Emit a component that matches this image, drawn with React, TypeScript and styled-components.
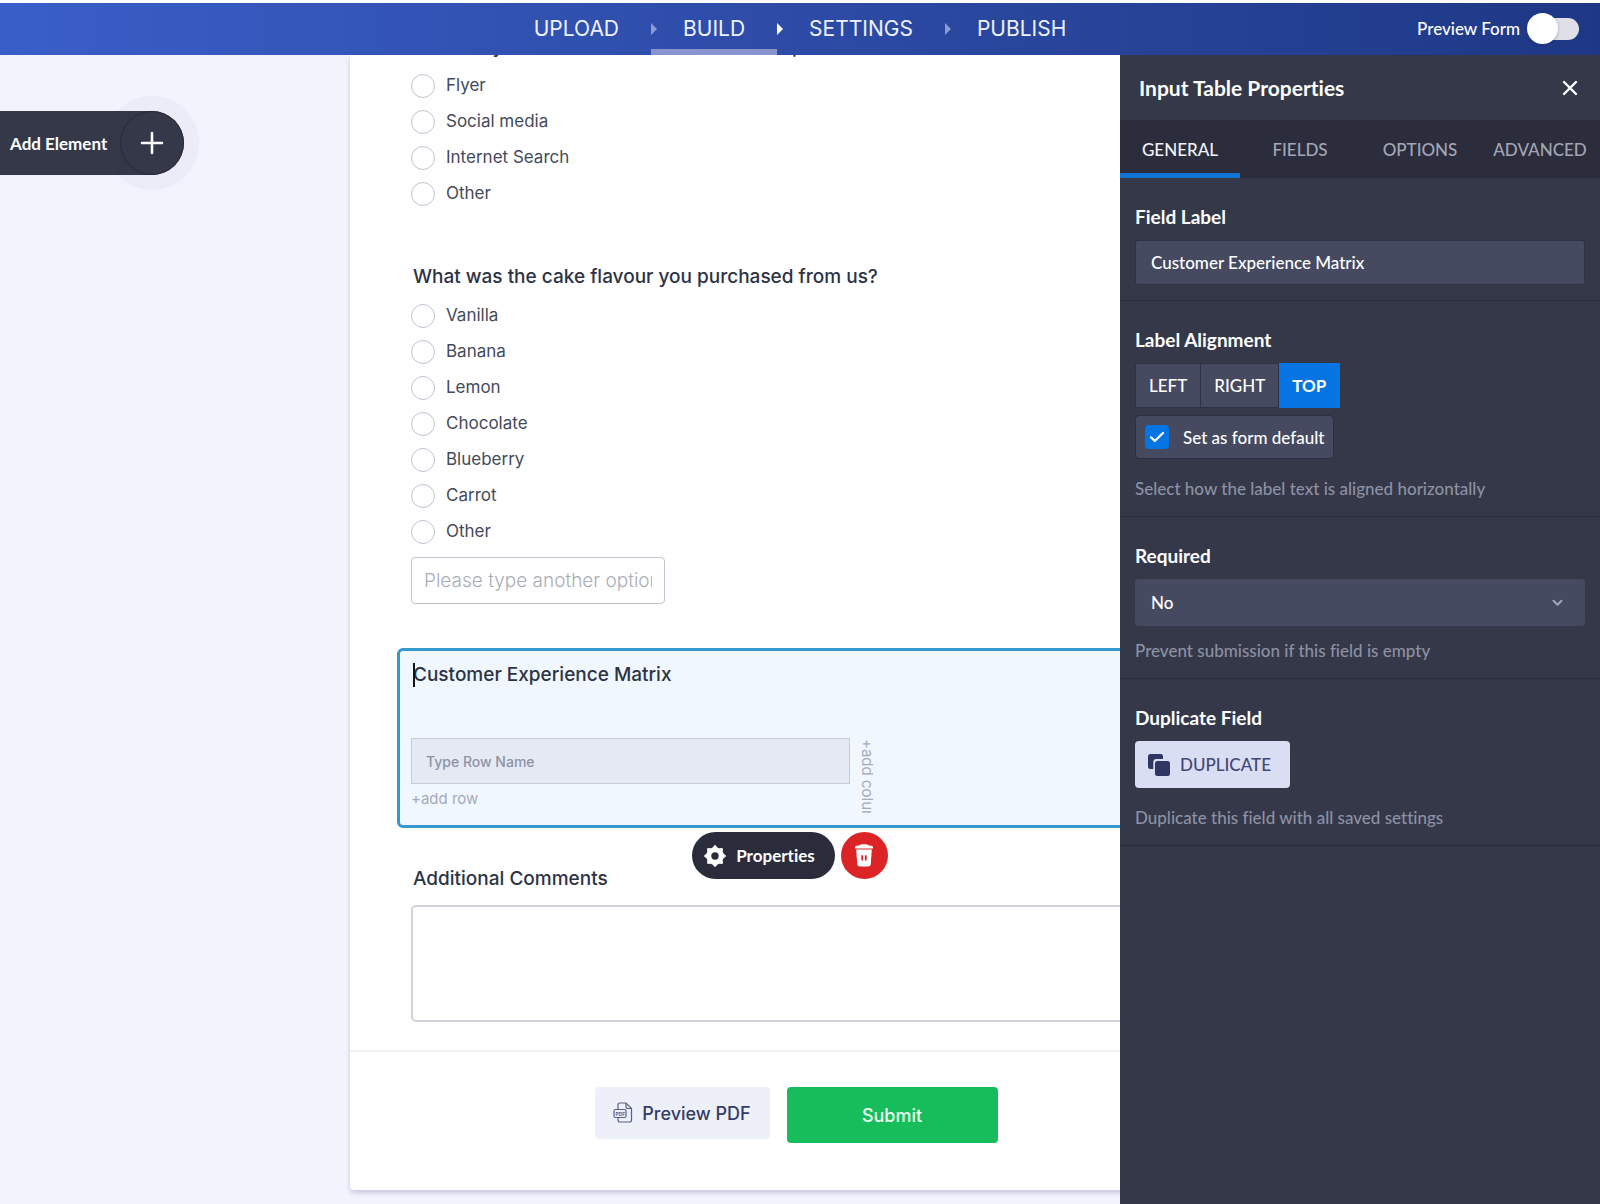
import React, { useState } from "react";
import styled, { createGlobalStyle, css } from "styled-components";

const formFont = `Inter, "Noto Sans", sans-serif`;
const panelFont = `Lato, "Open Sans", sans-serif`;

const GlobalStyle = createGlobalStyle`
  *, *::before, *::after { box-sizing: border-box; }
  body { margin: 0; background: #f3f3fe; font-family: ${formFont}; font-variant-ligatures: no-common-ligatures; }
  button, input, select, textarea { font: inherit; color: inherit; margin: 0; font-variant-ligatures: inherit; }
  button { cursor: pointer; }
`;

const Page = styled.div`
  display: flex;
  flex-direction: column;
  min-height: 100vh;
  border-top: 3px solid #fff;
`;

/* ---------- header ---------- */

const Header = styled.header`
  display: grid;
  grid-template-columns: 1fr auto 1fr;
  align-items: center;
  height: 52px;
  color: #fff;
  background: linear-gradient(90deg, #3a5ec8 0%, #2d4ba6 50%, #1e3885 100%);
`;

const Steps = styled.nav`
  grid-column: 2;
  display: flex;
  height: 100%;
`;

const Step = styled.a<{ $current?: boolean; $lit?: boolean; $first?: boolean }>`
  position: relative;
  display: flex;
  align-items: center;
  padding: 0 32px;
  font-size: 21px;
  line-height: 24px;
  color: #eef1ff;
  text-decoration: none;
  box-shadow: ${(p) => (p.$current ? "inset 0 -6px 0 #8794cd" : "none")};

  &::before {
    content: "";
    display: ${(p) => (p.$first ? "none" : "block")};
    position: absolute;
    left: 0;
    border-style: solid;
    border-width: 6px 0 6px 6px;
    border-color: transparent transparent transparent ${(p) => (p.$lit ? "#fff" : "#8c9ad6")};
  }
`;

const PreviewToggle = styled.label`
  justify-self: end;
  display: flex;
  align-items: center;
  gap: 10px;
  padding-right: 21px;
  font-family: ${panelFont};
  font-size: 17px;
  font-weight: 500;
  line-height: 24px;
`;

const Switch = styled.input`
  appearance: none;
  position: relative;
  width: 49px;
  height: 22px;
  border-radius: 11px;
  background: #dfdfe8;

  &::before {
    content: "";
    position: absolute;
    top: -5px;
    left: -3px;
    width: 31px;
    height: 31px;
    border-radius: 50%;
    background: #fff;
    box-shadow: 0 1px 3px rgba(20, 30, 80, 0.3);
  }
  &:checked::before { left: 21px; }
`;

/* ---------- workspace ---------- */

const Workspace = styled.div`
  display: flex;
  flex: 1;
`;

const Builder = styled.main`
  display: flex;
  align-items: flex-start;
  flex: 1;
  min-width: 0;
  overflow: hidden;
`;

const Rail = styled.div`
  flex: 0 0 350px;
  padding-top: 56px;
`;

const AddElement = styled.button`
  display: flex;
  align-items: center;
  justify-content: space-between;
  width: 184px;
  height: 64px;
  padding: 0 0 0 10px;
  border: 0;
  border-radius: 0 32px 32px 0;
  background: #343849;
  color: #fff;
  font-family: ${panelFont};
  font-size: 17px;
  font-weight: 700;
`;

const PlusDisc = styled.span`
  display: grid;
  place-items: center;
  width: 64px;
  height: 64px;
  border-radius: 50%;
  border: 1px solid #282b3a;
  background: #343849;
  box-shadow: 0 0 0 15px rgba(40, 40, 70, 0.03);
`;

const FormCard = styled.form`
  flex: 1 0 880px;
  background: #fff;
  border-radius: 0 0 4px 4px;
  box-shadow: 0 3px 5px rgba(90, 95, 150, 0.28);
`;

const FormBody = styled.div`
  padding: 0 61px 28px;
  color: #2c3345;
`;

const Question = styled.fieldset<{ $scrolled?: boolean }>`
  border: 0;
  padding: 0;
  margin: ${(p) => (p.$scrolled ? "-20px 0 53px" : "0 0 44px")};
  min-width: 0;
`;

const questionText = css`
  display: block;
  padding: 0 0 0 2px;
  font-size: 19px;
  font-weight: 450;
  line-height: 24px;
`;

const Legend = styled.legend`
  ${questionText}
  margin-bottom: 9px;
`;

const Option = styled.label`
  display: flex;
  align-items: center;
  gap: 11px;
  height: 36px;
  font-size: 17px;
  line-height: 24px;
  color: #434a5c;
`;

const OptionText = styled.span`
  padding-bottom: 3px;
`;

const Radio = styled.input`
  appearance: none;
  width: 24px;
  height: 24px;
  border: 1px solid #bfc3cf;
  border-radius: 50%;
  background: #fff;
  &:checked { border: 7px solid #0075e3; }
`;

const OtherInput = styled.input`
  display: block;
  width: 254px;
  height: 47px;
  margin-top: 7px;
  padding: 0 12px;
  border: 1px solid #c0c4ce;
  border-radius: 4px;
  font-size: 19px;
  font-weight: 300;
  &::placeholder { color: #a9adb8; opacity: 1; }
`;

const SelectedField = styled.section`
  position: relative;
  height: 180px;
  margin: 0 -14px 39px;
  padding: 12px 12px 0 11px;
  border: 3px solid #3398cd;
  border-radius: 6px;
  background: #f0f7ff;
`;

const FieldTitle = styled.h2`
  ${questionText}
  margin: 0 0 51px;
`;

const Caret = styled.span`
  position: absolute;
  width: 2px;
  height: 24px;
  background: #10131c;
`;

const Matrix = styled.div`
  display: flex;
  align-items: flex-start;
  gap: 7px;
`;

const MatrixRows = styled.div`
  display: flex;
  flex-direction: column;
  align-items: flex-start;
  gap: 5px;
`;

const RowName = styled.input`
  width: 439px;
  height: 46px;
  padding: 0 14px;
  border: 1px solid #c6cbda;
  background: #e5e9f4;
  font-size: 14px;
  font-weight: 500;
  &::placeholder { color: #8d93a5; opacity: 1; }
`;

const AddLink = styled.button<{ $vertical?: boolean }>`
  padding: 0;
  border: 0;
  background: none;
  font-size: 15px;
  line-height: 20px;
  color: #a5aab7;
  text-align: left;
  white-space: nowrap;
  overflow: hidden;
  ${(p) => p.$vertical && css`
    writing-mode: vertical-rl;
    height: 75px;
    padding-top: 1px;
  `}
`;

const FieldActions = styled.div`
  position: absolute;
  top: 181px;
  left: 0;
  right: 0;
  display: flex;
  justify-content: center;
  gap: 6px;
`;

const PropertiesButton = styled.button`
  display: flex;
  align-items: center;
  gap: 10px;
  height: 47px;
  padding: 0 20px 0 12px;
  border: 0;
  border-radius: 24px;
  background: #2a2c3c;
  color: #fff;
  font-family: ${panelFont};
  font-size: 17px;
  font-weight: 700;
`;

const DeleteButton = styled.button`
  display: grid;
  place-items: center;
  width: 47px;
  height: 47px;
  padding: 0;
  border: 0;
  border-radius: 50%;
  background: #dc2326;
`;

const CommentsLabel = styled.label`
  ${questionText}
`;

const Comments = styled.textarea`
  display: block;
  width: 100%;
  height: 117px;
  margin-top: 14px;
  border: 2px solid #d0d3db;
  border-radius: 5px;
  resize: none;
`;

const FormFooter = styled.footer`
  display: flex;
  align-items: flex-start;
  justify-content: center;
  gap: 17px;
  padding: 35px 0 47px 12px;
  border-top: 2px solid #f1f1f5;
`;

const PreviewPdf = styled.button`
  display: flex;
  align-items: center;
  justify-content: center;
  gap: 9px;
  width: 175px;
  height: 52px;
  padding: 0;
  border: 0;
  border-radius: 4px;
  background: #edf0f9;
  color: #343c6a;
  font-size: 18px;
  font-weight: 500;
`;

const Submit = styled.button`
  width: 211px;
  height: 56px;
  border: 0;
  border-radius: 4px;
  background: #18bd5b;
  color: #e9fff1;
  font-size: 18px;
  font-weight: 500;
`;

/* ---------- properties panel ---------- */

const Panel = styled.aside`
  flex: 0 0 480px;
  background: #343849;
  color: #fff;
  font-family: ${panelFont};
  font-weight: 500;
`;

const PanelHead = styled.div`
  display: flex;
  align-items: center;
  justify-content: space-between;
  height: 65px;
  padding: 0 22px 0 19px;
`;

const PanelTitle = styled.h1`
  margin: 0;
  font-size: 21px;
  font-weight: 700;
  line-height: 24px;
`;

const IconButton = styled.button`
  display: flex;
  padding: 0;
  border: 0;
  background: none;
`;

const Tabs = styled.div`
  display: grid;
  grid-template-columns: repeat(4, 1fr);
  height: 58px;
  background: #2b2d3c;
`;

const Tab = styled.button<{ $active: boolean }>`
  padding: 2px 0 0;
  border: 0;
  background: none;
  font-size: 17px;
  line-height: 24px;
  color: ${(p) => (p.$active ? "#f1f2f7" : "#a2a5b5")};
  box-shadow: ${(p) => (p.$active ? "inset 0 -5px 0 #0f74d3" : "none")};
`;

const Section = styled.section`
  padding: 27px 15px 15px;
  border-bottom: 1px solid #2a2d3d;
`;

const sectionTitle = css`
  display: block;
  margin: 0 0 11px;
  font-size: 19px;
  font-weight: 700;
  line-height: 24px;
`;
const SectionLabel = styled.label`${sectionTitle}`;
const SectionTitle = styled.h3`${sectionTitle}`;

const TextField = styled.input`
  display: block;
  width: 100%;
  height: 45px;
  padding: 0 15px;
  border: 1px solid #2e3142;
  border-radius: 3px;
  background: #454a60;
  font-size: 17px;
`;

const Segments = styled.div`
  display: flex;
`;

const Segment = styled.button<{ $active: boolean }>`
  height: 45px;
  padding: 0 13px;
  border: 1px solid ${(p) => (p.$active ? "#0675e4" : "#2e3142")};
  background: ${(p) => (p.$active ? "#0675e4" : "#454a60")};
  font-size: 17px;
  font-weight: ${(p) => (p.$active ? 700 : 500)};
  & + & { border-left-width: 0; }
`;

const DefaultBox = styled.label`
  display: flex;
  align-items: center;
  gap: 14px;
  width: fit-content;
  height: 44px;
  margin-top: 7px;
  padding: 0 9px;
  border: 1px solid #2c2f40;
  border-radius: 4px;
  background: #454a60;
  font-size: 17px;
`;

const TickHolder = styled.span`
  display: grid;
  width: 24px;
  height: 24px;
  & > * { grid-area: 1 / 1; }
  & > svg { pointer-events: none; place-self: center; z-index: 1; }
`;

const Tick = styled.input`
  appearance: none;
  width: 24px;
  height: 24px;
  border-radius: 4px;
  background: #5b6078;
  &:checked { background: #0675e4; }
`;

const Hint = styled.p<{ $near?: boolean }>`
  margin: ${(p) => (p.$near ? "13px" : "18px")} 0 0;
  font-size: 17px;
  line-height: 24px;
  color: #8d91a4;
`;

const SelectHolder = styled.div`
  display: grid;
  align-items: center;
  & > * { grid-area: 1 / 1; }
  & > svg { justify-self: end; margin-right: 22px; pointer-events: none; }
`;

const SelectField = styled.select`
  appearance: none;
  width: 100%;
  height: 47px;
  padding: 0 16px;
  border: 0;
  border-radius: 4px;
  background: #454a60;
  font-size: 17px;
`;

const DuplicateButton = styled.button`
  display: flex;
  align-items: center;
  gap: 10px;
  height: 47px;
  padding: 0 19px 0 13px;
  border: 0;
  border-radius: 4px;
  background: #dadef3;
  color: #414878;
  font-size: 17px;
`;

/* ---------- icons ---------- */

const PlusIcon = () => (
  <svg width="24" height="24" viewBox="0 0 24 24" stroke="#fff" strokeWidth="2.6" strokeLinecap="round">
    <path d="M12 2v20M2 12h20" />
  </svg>
);

const CloseIcon = () => (
  <svg width="16" height="16" viewBox="0 0 16 16" stroke="#fff" strokeWidth="2.4" strokeLinecap="round">
    <path d="M2 2l12 12M14 2L2 14" />
  </svg>
);

const GearIcon = () => (
  <svg width="22" height="22" viewBox="0 0 22 22" fill="none" stroke="#fff">
    <circle cx="11" cy="11" r="6.2" strokeWidth="5" />
    {[0, 45, 90, 135].map((a) => (
      <path key={a} d="M7.900 3.600L10.300 .3h1.400l2.400 3.300zM7.900 18.400l2.400 3.300h1.400l2.400-3.300z" fill="#fff" stroke="none" transform={`rotate(${a} 11 11)`} />
    ))}
  </svg>
);

const TrashIcon = () => (
  <svg width="20" height="23" viewBox="0 0 20 23">
    <path d="M1 3.4q0-1.4 1.4-1.6L6 1.3Q6.500 .3 7.600 .3h4.800q1.100 0 1.600 1l3.600 .5Q19 2 19 3.400V4.600H1z" fill="#fff" />
    <path d="M2.200 5.600h15.600L16.800 20q-.2 2.500-2.700 2.500H5.900Q3.400 22.500 3.200 20z" fill="#fff" />
    <path d="M8.200 11.200v5.400M11.800 11.200v5.400" stroke="#dc2326" strokeWidth="1.800" />
  </svg>
);

const PdfIcon = () => (
  <svg width="20" height="22" viewBox="0 0 20 22" fill="none" stroke="#5b6183" strokeWidth="1.200">
    <path d="M5 7V3q0-2 2-2h6l5.500 5.500V18q0 2-2 2H7q-2 0-2-2v-2" />
    <path d="M13 1v3.500q0 2 2 2h3.500" />
    <rect x="1" y="7.500" width="12" height="8" rx="1.500" />
    <text x="2.500" y="13.500" fontSize="5" fontWeight="700" fontFamily="Inter, sans-serif" fill="#5b6183" stroke="none">PDF</text>
  </svg>
);

const CheckIcon = () => (
  <svg width="16" height="12" viewBox="0 0 16 12" fill="none" stroke="#fff" strokeWidth="2.200" strokeLinecap="round" strokeLinejoin="round">
    <path d="M2 6.300L5.800 10 14 2" />
  </svg>
);

const ChevronIcon = () => (
  <svg width="11" height="8" viewBox="0 0 11 8" fill="none" stroke="#a3a7b8" strokeWidth="2" strokeLinecap="round" strokeLinejoin="round">
    <path d="M1.500 1.800l4 4 4-4" />
  </svg>
);

const DuplicateIcon = () => (
  <svg width="22" height="22" viewBox="0 0 22 22" fill="#2f3663">
    <path d="M2.500 0h10Q15 0 15 2.500V5H8.500Q5.300 5 5.300 8.200V15H2.500Q0 15 0 12.500v-10Q0 0 2.500 0z" />
    <rect x="7" y="7" width="15" height="15" rx="2.500" />
  </svg>
);

/* ---------- page ---------- */

const sources = ["Flyer", "Social media", "Internet Search", "Other"];
const flavours = ["Vanilla", "Banana", "Lemon", "Chocolate", "Blueberry", "Carrot", "Other"];
const tabs = ["GENERAL", "FIELDS", "OPTIONS", "ADVANCED"];
const alignments = ["LEFT", "RIGHT", "TOP"];

const Options = ({ name, items }: { name: string; items: string[] }) => (
  <>
    {items.map((item) => (
      <Option key={item}>
        <Radio type="radio" name={name} value={item} />
        <OptionText>{item}</OptionText>
      </Option>
    ))}
  </>
);

export default function App() {
  const [tab, setTab] = useState("GENERAL");
  const [alignment, setAlignment] = useState("TOP");

  return (
    <Page>
      <GlobalStyle />
      <Header>
        <Steps>
          <Step href="#upload" $first>UPLOAD</Step>
          <Step href="#build" $current>BUILD</Step>
          <Step href="#settings" $lit>SETTINGS</Step>
          <Step href="#publish">PUBLISH</Step>
        </Steps>
        <PreviewToggle>
          Preview Form
          <Switch type="checkbox" role="switch" />
        </PreviewToggle>
      </Header>

      <Workspace>
        <Builder>
          <Rail>
            <AddElement type="button">
              Add Element
              <PlusDisc><PlusIcon /></PlusDisc>
            </AddElement>
          </Rail>

          <FormCard onSubmit={(e) => e.preventDefault()}>
            <FormBody>
              <Question $scrolled>
                <Legend>How did you first hear about our cake shop?</Legend>
                <Options name="source" items={sources} />
              </Question>

              <Question>
                <Legend>What was the cake flavour you purchased from us?</Legend>
                <Options name="flavour" items={flavours} />
                <OtherInput aria-label="Other flavour" placeholder="Please type another option here" />
              </Question>

              <SelectedField>
                <FieldTitle><Caret />Customer Experience Matrix</FieldTitle>
                <Matrix>
                  <MatrixRows>
                    <RowName aria-label="Row name" placeholder="Type Row Name" />
                    <AddLink type="button">+add row</AddLink>
                  </MatrixRows>
                  <AddLink type="button" $vertical>+add column</AddLink>
                </Matrix>
                <FieldActions>
                  <PropertiesButton type="button"><GearIcon />Properties</PropertiesButton>
                  <DeleteButton type="button" aria-label="Delete"><TrashIcon /></DeleteButton>
                </FieldActions>
              </SelectedField>

              <CommentsLabel htmlFor="comments">Additional Comments</CommentsLabel>
              <Comments id="comments" />
            </FormBody>
            <FormFooter>
              <PreviewPdf type="button"><PdfIcon />Preview PDF</PreviewPdf>
              <Submit type="submit">Submit</Submit>
            </FormFooter>
          </FormCard>
        </Builder>

        <Panel>
          <PanelHead>
            <PanelTitle>Input Table Properties</PanelTitle>
            <IconButton type="button" aria-label="Close"><CloseIcon /></IconButton>
          </PanelHead>
          <Tabs role="tablist">
            {tabs.map((t) => (
              <Tab key={t} type="button" role="tab" aria-selected={t === tab} $active={t === tab} onClick={() => setTab(t)}>{t}</Tab>
            ))}
          </Tabs>
          <Section>
            <SectionLabel htmlFor="field-label">Field Label</SectionLabel>
            <TextField id="field-label" defaultValue="Customer Experience Matrix" />
          </Section>
          <Section>
            <SectionTitle>Label Alignment</SectionTitle>
            <Segments>
              {alignments.map((a) => (
                <Segment key={a} type="button" $active={a === alignment} onClick={() => setAlignment(a)}>{a}</Segment>
              ))}
            </Segments>
            <DefaultBox>
              <TickHolder><Tick type="checkbox" defaultChecked /><CheckIcon /></TickHolder>
              Set as form default
            </DefaultBox>
            <Hint>Select how the label text is aligned horizontally</Hint>
          </Section>
          <Section>
            <SectionLabel htmlFor="required">Required</SectionLabel>
            <SelectHolder>
              <SelectField id="required" defaultValue="No">
                <option>No</option>
                <option>Yes</option>
              </SelectField>
              <ChevronIcon />
            </SelectHolder>
            <Hint $near>Prevent submission if this field is empty</Hint>
          </Section>
          <Section>
            <SectionTitle>Duplicate Field</SectionTitle>
            <DuplicateButton type="button"><DuplicateIcon />DUPLICATE</DuplicateButton>
            <Hint>Duplicate this field with all saved settings</Hint>
          </Section>
        </Panel>
      </Workspace>
    </Page>
  );
}
